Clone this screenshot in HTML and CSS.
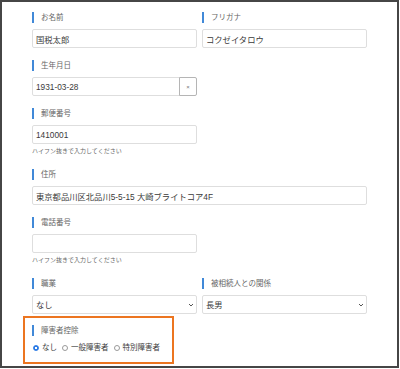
FILE: index.html
```html
<!DOCTYPE html>
<html lang="ja">
<head>
  <meta charset="UTF-8">
  <title>申告者情報</title>
  <link rel="stylesheet" href="styles.css">
</head>
<body>
  <div class="frame">
    <form class="form">
      <div class="row">
        <div class="field">
          <label class="label">お名前</label>
          <input class="input" type="text" value="国税太郎">
        </div>
        <div class="field">
          <label class="label">フリガナ</label>
          <input class="input" type="text" value="コクゼイタロウ">
        </div>
      </div>

      <div class="row">
        <div class="field">
          <label class="label">生年月日</label>
          <div class="date-group">
            <input class="input" type="text" value="1931-03-28">
            <button class="clear" type="button">×</button>
          </div>
        </div>
      </div>

      <div class="row row-hint">
        <div class="field">
          <label class="label">郵便番号</label>
          <input class="input" type="text" value="1410001">
          <p class="hint">ハイフン抜きで入力してください</p>
        </div>
      </div>

      <div class="row">
        <div class="field wide">
          <label class="label">住所</label>
          <input class="input" type="text" value="東京都品川区北品川5-5-15 大崎ブライトコア4F">
        </div>
      </div>

      <div class="row row-hint">
        <div class="field">
          <label class="label">電話番号</label>
          <input class="input" type="text" value="">
          <p class="hint">ハイフン抜きで入力してください</p>
        </div>
      </div>

      <div class="row row-tight">
        <div class="field">
          <label class="label">職業</label>
          <div class="select-wrap">
            <select class="select"><option>なし</option></select>
            <svg class="chevron" width="6" height="4" viewBox="0 0 6 4"><path d="M1 1l2 2 2-2" fill="none" stroke="#555" stroke-width="1"/></svg>
          </div>
        </div>
        <div class="field">
          <label class="label">被相続人との関係</label>
          <div class="select-wrap">
            <select class="select"><option>長男</option></select>
            <svg class="chevron" width="6" height="4" viewBox="0 0 6 4"><path d="M1 1l2 2 2-2" fill="none" stroke="#555" stroke-width="1"/></svg>
          </div>
        </div>
      </div>

      <div class="highlight">
        <label class="label">障害者控除</label>
        <div class="radios">
          <label class="radio"><input type="radio" name="shogai" checked> なし</label>
          <label class="radio"><input type="radio" name="shogai"> 一般障害者</label>
          <label class="radio"><input type="radio" name="shogai"> 特別障害者</label>
        </div>
      </div>
    </form>
  </div>
</body>
</html>
```

FILE: styles.css
```css
* {
  margin: 0;
  padding: 0;
  box-sizing: border-box;
  font-family: 'Liberation Sans', 'Noto Sans CJK JP', sans-serif;
}

body {
  background: #ffffff;
}

.frame {
  width: 399px;
  height: 368px;
  border: 2px solid #464646;
  background: #ffffff;
  padding: 10px 30px 0 21px;
}

.row {
  display: flex;
  gap: 5px;
  padding-left: 9px;
  margin-bottom: 12px;
}

.row-hint {
  margin-bottom: 13px;
}

.row-tight {
  margin-bottom: 2px;
}

.field {
  width: 165px;
}

.field.wide {
  width: 335px;
}

.label {
  display: block;
  height: 11px;
  line-height: 11px;
  padding-left: 7px;
  border-left: 2px solid #4189d8;
  font-size: 7.5px;
  color: #666;
  margin-bottom: 6px;
}

.input,
.select {
  display: block;
  width: 100%;
  height: 19px;
  padding: 0 3px;
  font-size: 8.3px;
  color: #3a3a3a;
  background: #fff;
  border: 1px solid #dedede;
  border-radius: 2px;
  outline: none;
}

.date-group {
  display: flex;
}

.date-group .input {
  border-radius: 2px 0 0 2px;
}

.clear {
  width: 18px;
  height: 19px;
  flex-shrink: 0;
  border: 1px solid #b5b5b5;
  border-radius: 0 2px 2px 0;
  margin-left: -1px;
  background: #fff;
  color: #777;
  font-size: 6px;
  cursor: pointer;
}

.hint {
  margin-top: 3px;
  font-size: 6px;
  line-height: 9px;
  color: #666;
}

.select-wrap {
  position: relative;
}

.select {
  appearance: none;
  -webkit-appearance: none;
}

.chevron {
  position: absolute;
  right: 3px;
  top: 8px;
  pointer-events: none;
}

.highlight {
  width: 151px;
  height: 48px;
  border: 2px solid #ec7520;
  padding: 7px 0 0 7px;
}

.radios {
  display: flex;
  gap: 4px;
  margin-top: 3px;
}

.radio {
  display: flex;
  align-items: center;
  gap: 2px;
  font-size: 7.5px;
  color: #3a3a3a;
  line-height: 11px;
}

.radio input {
  appearance: none;
  -webkit-appearance: none;
  width: 6px;
  height: 6px;
  border: 1px solid #9a9a9a;
  border-radius: 50%;
  background: #fff;
  margin: 0 1px 0 1px;
}

.radio input:checked {
  border-color: #2c7be5;
  background: radial-gradient(circle, #fff 0 1px, #2c7be5 1.3px);
}
```
